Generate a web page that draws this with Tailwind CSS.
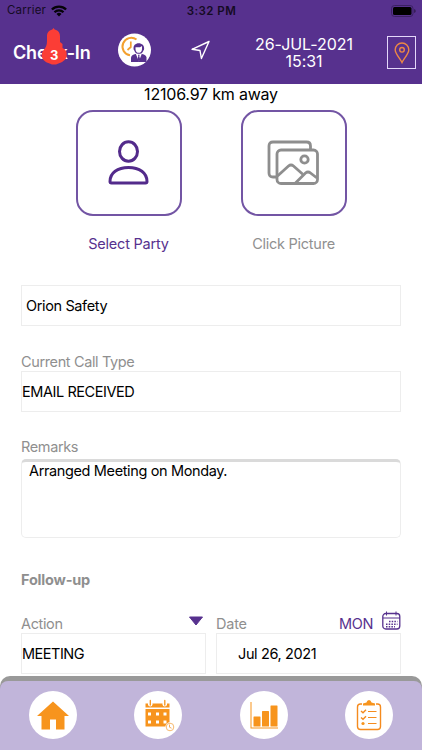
<!DOCTYPE html>
<html lang="en">
<head>
<meta charset="utf-8">
<meta name="viewport" content="width=device-width, initial-scale=1">
<title>Check-In</title>
<script src="https://cdn.jsdelivr.net/npm/@tailwindcss/browser@4"></script>
</head>
<body class="bg-white">
<div class="flex h-[750px] w-[422px] flex-col overflow-hidden bg-white font-['Inter',sans-serif] text-[14.5px] tracking-[-0.37px] text-black">
  <header class="h-[84px] shrink-0 bg-[#57318e]">
    <div class="grid h-[22px] grid-cols-3 items-center pl-[7px] pr-[6px] text-[11.5px] text-[#150b24]">
      <div class="flex items-center gap-[5px]">
        <span class="tracking-[0.2px]">Carrier</span>
        <svg class="h-[12px] w-[16px]" viewBox="0 0 16 12" fill="none" stroke="#050308" stroke-width="2.3"><path d="M.9 4.5a10 10 0 0 1 14.2 0M3.5 7.2a6.3 6.3 0 0 1 9 0"/><path d="M8 11.6 5.5 9.1a3.5 3.5 0 0 1 5 0z" fill="#050308" stroke="none"/></svg>
      </div>
      <span class="pt-px text-center font-semibold tracking-[0.45px]">3:32 PM</span>
      <svg class="h-[12px] w-[25px] justify-self-end" viewBox="0 0 25 12"><rect x=".5" y=".5" width="21.5" height="11" rx="3" fill="none" stroke="#3b2163"/><rect x="2" y="2" width="18.5" height="8" rx="1.5" fill="#000"/><path d="M23.3 4v4q1.3-.5 1.3-2t-1.3-2" fill="#291742"/></svg>
    </div>
    <div class="flex h-[62px] items-start text-white">
      <div class="relative ml-[13px] mt-[20px] h-[22px] w-[105px]">
        <h1 class="text-[18px] font-semibold leading-[22px] tracking-[-0.2px]">Check-In</h1>
        <div class="absolute left-[28px] top-[-14px] h-[38px] w-[26px]">
          <svg class="h-full w-full" viewBox="0 0 26 38"><path d="M11.300 1.500 12.500 0l1.200 1.500c3.800.8 5.300 3.500 5.300 7v5.500l2.500 2v4l2.500 1.500q1.700 1.500 1.700 5.500c0 4-3 6.500-7 8l-3.700 1.500h-4L7.300 35C3.300 33.500.700 31 .700 27q0-3.500 2-5c2.300-2.500 3.300-5 3.300-9V8.500c0-3.500 1.500-6.200 5.300-7z" fill="#fb3d36"/></svg>
          <span class="absolute left-0 top-[19px] w-full text-center text-[13px] font-bold leading-[16px]">3</span>
        </div>
      </div>
      <svg class="mt-[11px] h-[34px] w-[34px]" viewBox="0 0 34 34"><circle cx="16.500" cy="17" r="16.500" fill="#fff"/><path d="M18.500 6.500A8.800 8.800 0 1 0 12 22.300" fill="none" stroke="#f3a02f" stroke-width="2"/><path d="M12.800 8.500v5.500l-3.300 3" fill="none" stroke="#f3a02f" stroke-width="1.700"/><path d="M15.700 16.500c-2-8.500 11.800-8.500 10.300 0l-1.300 2.500c-1.700 3-6 3-7.700 0z" fill="#57318e"/><path d="M17.500 14.200h4.500l2-1.300v3c0 5.200-6.500 5.200-6.500 0z" fill="#fff"/><path d="M13 29V24.500q.5-2.700 4.500-3.500h6.500q4 .8 4.500 3.500V29z" fill="#57318e"/><path d="m17.800 20.800 3 7.700 3-7.700z" fill="#fff"/><path d="m20 21.800.3 1.500-.9 3.200 1.400 2 1.400-2-.9-3.200.3-1.500z" fill="#57318e"/></svg>
      <svg class="ml-[38px] mt-[18px] h-[21px] w-[21px]" viewBox="0 0 21 21" fill="none" stroke="#fff" stroke-width="1.400" stroke-linejoin="round"><path d="M19 1.500 2 9.300l8 1.200 1.400 8z"/></svg>
      <div class="ml-[33px] mt-[14px] w-[120px] text-center text-[16px] leading-[16.500px] tracking-[-0.05px]">26-JUL-2021<br>15:31</div>
      <div class="ml-[23px] mt-[14px] flex h-[33px] w-[29px] items-center justify-center border border-[#e4d7fa]">
        <svg class="h-[22px] w-[16px]" viewBox="0 0 16 22" fill="none" stroke="#ee8844" stroke-width="1.400"><path d="M8 20.500C6.500 17 1.200 12 1.200 7.800a6.800 6.800 0 0 1 13.600 0C14.800 12 9.500 17 8 20.500z"/><circle cx="8" cy="7.800" r="2.300"/></svg>
      </div>
    </div>
  </header>

  <main class="h-[592px] shrink-0">
    <p class="h-[26px] text-center text-[16px] leading-[21px] tracking-[-0.2px]">12106.97 km away</p>
    <div class="flex gap-[58px] pl-[75px]">
      <div class="flex w-[107px] flex-col items-center text-[#57318e]">
        <div class="flex h-[106px] w-[106px] items-center justify-center rounded-[17px] border-2 border-[#7355a4]">
          <svg class="h-[48px] w-[44px]" viewBox="0 0 44 48" fill="none" stroke="#532b8b" stroke-width="3"><ellipse cx="21.500" cy="12.500" rx="9" ry="9.700"/><path d="M3 42.500C3 34 10.500 28.500 21.500 28.500S40 34 40 42.500q0 1.500-1.500 1.500H4.500q-1.500 0-1.500-1.500z"/></svg>
        </div>
        <span class="mt-[18px] whitespace-nowrap leading-[20px] tracking-[-0.22px]">Select Party</span>
      </div>
      <div class="flex w-[107px] flex-col items-center text-[#909090]">
        <div class="flex h-[106px] w-[106px] items-center justify-center rounded-[17px] border-2 border-[#7355a4]">
          <svg class="h-[48px] w-[54px]" viewBox="0 0 54 48" fill="none" stroke="#8e8e8e" stroke-width="2.800"><path d="M9.500 38H6q-4 0-4-4V7q0-4 4-4h33.500q4 0 4 4v3"/><rect x="10" y="11" width="40.500" height="33.500" rx="4"/><circle cx="37.500" cy="20.500" r="3.700"/><path d="m10.500 37 11-10q2.500-2 5 0l9 8M28.500 44l10-10q2.500-2 5 0l6.500 5"/></svg>
        </div>
        <span class="mt-[18px] whitespace-nowrap leading-[20px] tracking-[-0.25px]">Click Picture</span>
      </div>
    </div>

    <div class="mt-[31px] px-[21px]">
      <div class="h-[41px] border border-[#ededed] pl-[4px] leading-[40px]">Orion Safety</div>
      <div class="mt-[26px] h-[19px] leading-[20px] text-[#8f8f8f]">Current Call Type</div>
      <div class="h-[41px] border border-[#ededed] leading-[39px] tracking-[-0.43px]">EMAIL RECEIVED</div>
      <div class="mt-[25px] h-[22px] leading-[20px] text-[#8f8f8f]">Remarks</div>
      <div class="h-[79px] rounded-[5px] border border-t-[3px] border-[#ededed] border-t-[#dadada] pl-[7px] leading-[17px]">Arranged Meeting on Monday.</div>
      <div class="mt-[32px] h-[20px] font-bold leading-[20px] tracking-[-0.2px] text-[#8f8f8f]">Follow-up</div>
      <div class="mt-[20px] grid grid-cols-[185px_185px] gap-[10px]">
        <div>
          <div class="flex h-[23px] justify-between pr-[3px] text-[#8f8f8f]">
            <span class="pt-[4px] leading-[20px]">Action</span>
            <svg class="mt-[6px] h-[10px] w-[14px]" viewBox="0 0 14 10"><path d="M.5 1h13L7 9z" fill="#57318e" stroke="#57318e" stroke-linejoin="round"/></svg>
          </div>
          <div class="h-[41px] border border-[#ededed] leading-[40px] tracking-[-0.5px]">MEETING</div>
        </div>
        <div>
          <div class="flex h-[23px] text-[#8f8f8f]">
            <span class="pt-[4px] leading-[20px] tracking-[-0.2px]">Date</span>
            <span class="ml-auto pt-[4px] leading-[20px] text-[#57318e]">MON</span>
            <svg class="ml-[9px] mt-px h-[20px] w-[19px]" viewBox="0 0 19 20" fill="none" stroke="#57318e"><rect x=".8" y="2.500" width="17" height="15.500" rx="3" stroke-width="1.300"/><path d="M1 7h17M4.500.500v4M14 .500v4"/><path d="M7 10.500h8.500M4 13.200h11.500M4 15.700h9" stroke-width="1.500" stroke-dasharray="1.500 1.200"/></svg>
          </div>
          <div class="h-[41px] border border-[#ededed] pl-[21px] leading-[40px]">Jul 26, 2021</div>
        </div>
      </div>
    </div>
  </main>

  <footer class="h-[74px] shrink-0 rounded-t-[10px] bg-[#999] pt-[5px]">
    <nav class="flex h-[69px] items-start justify-between rounded-t-[8px] bg-[#c1b5da] px-[29px] pt-[10px]">
      <div class="flex h-[48px] w-[48px] items-center justify-center rounded-full bg-white">
        <svg class="h-[48px] w-[48px]" viewBox="0 0 48 48"><path d="M24 10.500 8 25h4.500v13.500H21V28.500h6v10h8.500V25H40z" fill="#f7941d"/></svg>
      </div>
      <div class="flex h-[48px] w-[48px] items-center justify-center rounded-full bg-white">
        <svg class="h-[48px] w-[48px]" viewBox="0 0 48 48"><path d="M11.500 12.500h24v4h-24zM11.500 18h24v17.500h-24z" fill="#f7941d"/><g fill="#fff"><path d="M14 21.500h3v3h-3zM22 21.500h3v3h-3zM29.500 21.500h3v3h-3zM14 29.500h3v3h-3zM22 29.500h3v3h-3zM29.500 29.500h3v3h-3z"/><rect x="14" y="8.500" width="4.500" height="7" rx="2.200"/><rect x="28.500" y="8.500" width="4.500" height="7" rx="2.200"/></g><g fill="none" stroke="#f7941d" stroke-width="1.300" stroke-linecap="round"><path d="M16.300 9.500v4.500M30.800 9.500v4.500"/></g><circle cx="36" cy="36" r="4.700" fill="#fff"/><circle cx="36" cy="36" r="3.800" fill="#fff" stroke="#f5b15f" stroke-width=".900"/><path d="M35.500 33.500V36.200l2 1" fill="none" stroke="#f5a347" stroke-width=".9"/></svg>
      </div>
      <div class="flex h-[48px] w-[48px] items-center justify-center rounded-full bg-white">
        <svg class="h-[48px] w-[48px]" viewBox="0 0 48 48" fill="#f7941d"><path d="M10.500 11h1v25.500H38v1H10.500z"/><rect x="13.500" y="25.500" width="7" height="10" rx=".5"/><rect x="22" y="20" width="7" height="15.500" rx=".5"/><rect x="30.500" y="14.500" width="7" height="21" rx=".5"/></svg>
      </div>
      <div class="flex h-[48px] w-[48px] items-center justify-center rounded-full bg-white">
        <svg class="h-[48px] w-[48px]" viewBox="0 0 48 48" fill="none" stroke="#f58b1e" stroke-width="1.400"><path d="M17 13h-1.500q-3 0-3 3v19.500q0 3 3 3h17q3 0 3-3V16q0-3-3-3H31"/><path d="M18 14.500V12.500l3.500-1q.5-2.500 2.500-2.500t2.500 2.500l3.500 1v2z" fill="#f7941d" stroke="none"/><path d="m16 20 2 1.800 3-3M16 26.500l2 1.800 3-3"/><path d="M23 20.500h8.500M23 26.500h8.500M23 32.500h8.500" stroke-width="1"/><circle cx="18" cy="32.500" r="1.600" fill="#f7941d" stroke="none"/></svg>
      </div>
    </nav>
  </footer>
</div>
</body>
</html>
